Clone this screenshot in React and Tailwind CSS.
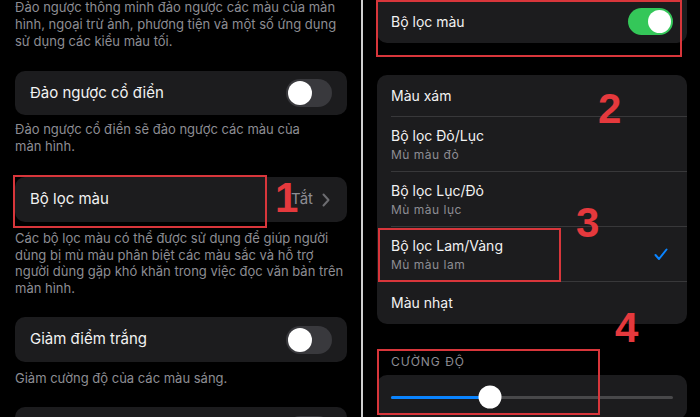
const Toggle = ({ on = false }) => (
  <div
    className={`flex items-center rounded-full p-[2px] ${
      on ? "w-[45px] h-[27px] bg-[#34c759] justify-end" : "w-[46px] h-[28px] bg-[#39393d] justify-start"
    }`}
  >
    <div className={`rounded-full bg-white ${on ? "w-[23px] h-[23px]" : "w-[24px] h-[24px]"}`} />
  </div>
);

const Mark = ({ children, className }) => (
  <div
    className={`absolute text-[42px] leading-none font-bold text-[#e5393d] font-['Liberation_Sans',Arial,sans-serif] ${className}`}
  >
    {children}
  </div>
);

const Box = ({ className }) => (
  <div className={`absolute border-2 border-[#d8363b] pointer-events-none ${className}`} />
);

const filters = [
  { title: "Màu xám" },
  { title: "Bộ lọc Đỏ/Lục", sub: "Mù màu đỏ" },
  { title: "Bộ lọc Lục/Đỏ", sub: "Mù màu lục" },
  { title: "Bộ lọc Lam/Vàng", sub: "Mù màu lam", checked: true },
  { title: "Màu nhạt" },
];

const Note = ({ children, className = "" }) => (
  <p className={`px-[15px] text-[13px] text-[#8d8d93] whitespace-nowrap ${className}`}>{children}</p>
);

const LeftScreen = () => (
  <div className="relative w-[361px] shrink-0 pr-[14px]">
    <Note className="-mt-px leading-[17px]">
      Đảo ngược thông minh đảo ngược các màu của màn
      <br />
      hình, ngoại trừ ảnh, phương tiện và một số ứng dụng
      <br />
      sử dụng các kiểu màu tối.
    </Note>

    <div className="mt-[21px] h-[44px] ml-[15px] rounded-[10px] bg-[#1c1c1e] flex items-center justify-between pl-[15px] pr-[15px]">
      <span className="text-[15px] text-[#f2f2f2]">Đảo ngược cổ điển</span>
      <Toggle />
    </div>
    <Note className="mt-[6px] leading-[17px]">
      Đảo ngược cổ điển sẽ đảo ngược các màu của
      <br />
      màn hình.
    </Note>

    <div className="mt-[22px] h-[45px] ml-[15px] rounded-[10px] bg-[#1c1c1e] flex items-center justify-between pl-[15px] pr-[17px]">
      <span className="text-[15px] text-[#f2f2f2]">Bộ lọc màu</span>
      <div className="flex items-center gap-[9px]">
        <span className="text-[15px] text-[#8d8d93]">Tắt</span>
        <svg width="8" height="14" viewBox="0 0 8 14" fill="none">
          <path d="M1.5 1.5L6.5 7L1.5 12.5" stroke="#6c6c70" strokeWidth="2" strokeLinecap="round" strokeLinejoin="round" />
        </svg>
      </div>
    </div>
    <Note className="mt-[8px] leading-[16.5px]">
      Các bộ lọc màu có thể được sử dụng để giúp người
      <br />
      dùng bị mù màu phân biệt các màu sắc và hỗ trợ
      <br />
      người dùng gặp khó khăn trong việc đọc văn bản trên
      <br />
      màn hình.
    </Note>

    <div className="mt-[21px] h-[45px] ml-[15px] rounded-[10px] bg-[#1c1c1e] flex items-center justify-between pl-[15px] pr-[15px]">
      <span className="text-[15px] text-[#f2f2f2]">Giảm điểm trắng</span>
      <Toggle />
    </div>
    <Note className="mt-[8px] leading-[17px]">Giảm cường độ của các màu sáng.</Note>

    <div className="mt-[20px] h-[45px] ml-[15px] rounded-[10px] bg-[#1c1c1e] flex items-center justify-end pr-[15px]">
      <Toggle />
    </div>

    <Box className="left-[13px] top-[175px] w-[254px] h-[53px]" />
    <Mark className="left-[275px] top-[177px]">1</Mark>
  </div>
);

const RightScreen = () => (
  <div className="relative flex-1 pl-[14px] pr-[13px]">
    <div className="-mt-[1px] h-[44px] rounded-b-[10px] bg-[#1c1c1e] flex items-center justify-between pl-[14px] pr-[14px]">
      <span className="text-[14px] text-[#f2f2f2]">Bộ lọc màu</span>
      <Toggle on />
    </div>

    <div className="mt-[32px] rounded-[10px] bg-[#1c1c1e] overflow-hidden">
      {filters.map((f, i) => (
        <div key={f.title} className={`pl-[14px] ${f.sub ? "h-[55px]" : "h-[42px]"}`}>
          <div
            className={`h-full flex items-center justify-between pr-[19px] ${
              i < filters.length - 1 ? "border-b border-[#38383a]" : ""
            }`}
          >
            <div className="flex flex-col">
              <span className="text-[14px] leading-[20px] text-[#f2f2f2]">{f.title}</span>
              {f.sub && (
                <span className="mt-[1px] text-[12px] leading-[15px] tracking-[0.5px] text-[#8d8d93]">{f.sub}</span>
              )}
            </div>
            {f.checked && (
              <svg width="14" height="13" viewBox="0 0 14 13" fill="none">
                <path d="M1.5 7L5 11L12.5 1.5" stroke="#0a84ff" strokeWidth="2" strokeLinecap="round" strokeLinejoin="round" />
              </svg>
            )}
          </div>
        </div>
      ))}
    </div>

    <p className="mt-[31px] pl-[14px] text-[12px] leading-[14px] tracking-[1px] text-[#8d8d93]">CƯỜNG ĐỘ</p>
    <div className="mt-[6px] h-[44px] rounded-[10px] bg-[#1c1c1e] flex items-center px-[14px]">
      <div className="relative flex-1 h-[3px] rounded-full bg-[#48484a]">
        <div className="absolute left-0 top-0 h-full w-[35%] rounded-full bg-[#0a84ff]" />
        <div className="absolute left-[35%] top-1/2 -translate-x-1/2 -translate-y-1/2 w-[23px] h-[23px] rounded-full bg-white" />
      </div>
    </div>

    <Box className="left-[13px] top-0 w-[306px] h-[57px]" />
    <Box className="left-[15px] top-[228px] w-[183px] h-[54px]" />
    <Box className="left-[14px] top-[349px] w-[223px] h-[66px]" />
    <Mark className="left-[235px] top-[88px]">2</Mark>
    <Mark className="left-[213px] top-[202px]">3</Mark>
    <Mark className="left-[252px] top-[307px]">4</Mark>
  </div>
);

export default function App() {
  return (
    <div className="w-[700px] h-[417px] overflow-hidden bg-black flex font-['Inter','Noto_Sans',sans-serif]">
      <LeftScreen />
      <div className="w-[2px] shrink-0 bg-[#cfcfcf]" />
      <RightScreen />
    </div>
  );
}
